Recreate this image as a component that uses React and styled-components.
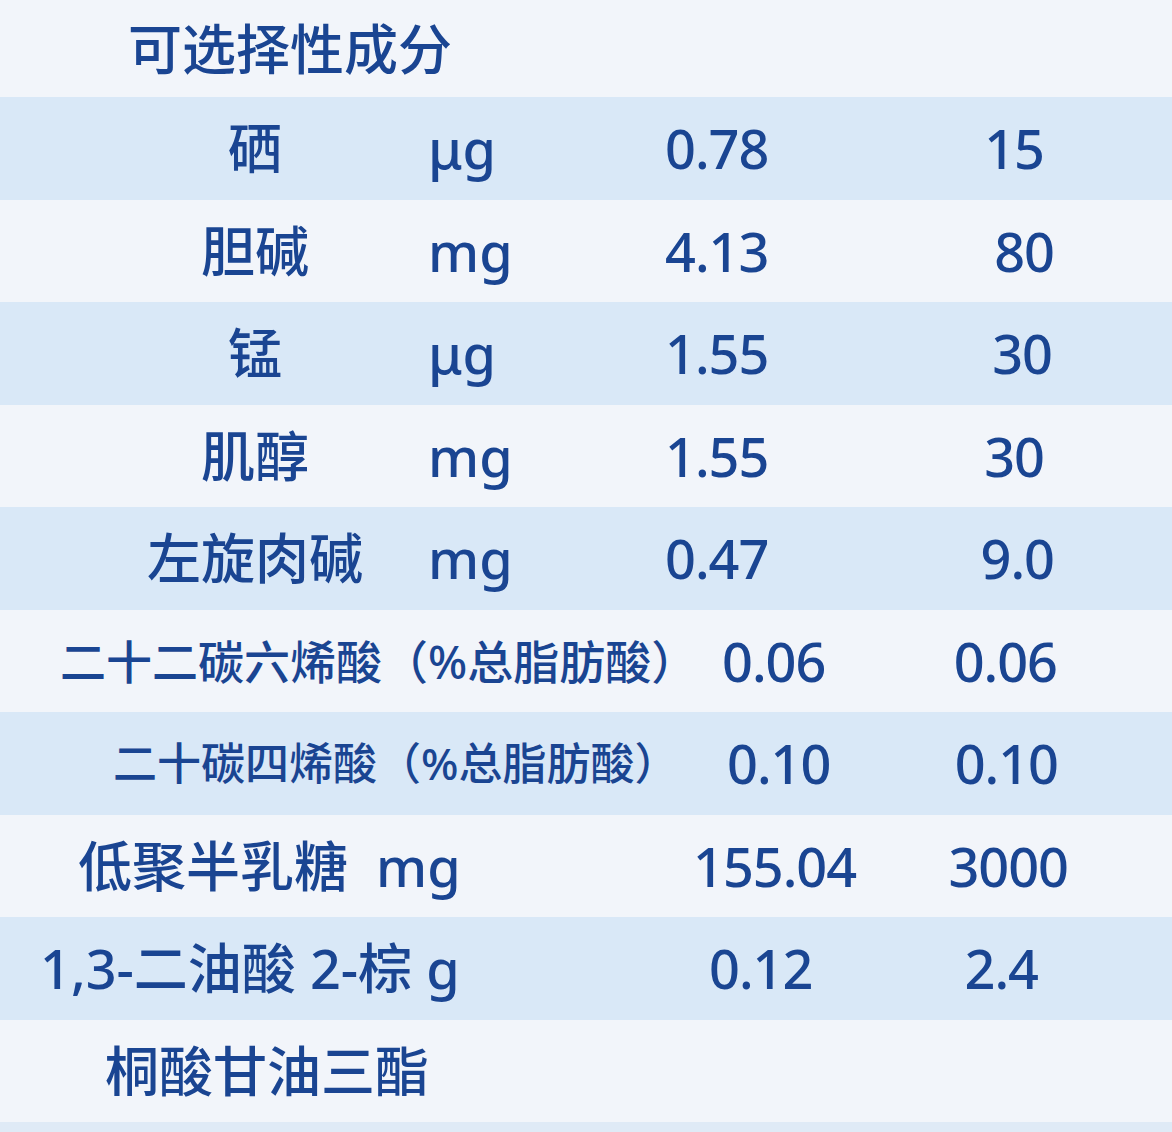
import React from "react";
import styled, { createGlobalStyle } from "styled-components";

const GlobalStyle = createGlobalStyle`
  html, body {
    margin: 0;
    padding: 0;
    background: #f2f5fa;
  }
  body {
    font-family: "Noto Sans", "Noto Sans CJK SC", sans-serif;
    font-weight: 500;
    color: #1a4592;
  }
`;

const Page = styled.div`
  width: 1172px;
  height: 1132px;
  overflow: hidden;
  background: #f2f5fa;
`;

const TitleBar = styled.div`
  height: 97px;
  display: flex;
  align-items: center;
  padding-left: 128px;
  font-size: 54px;
  line-height: 1;
`;

const Row = styled.div`
  height: 102.5px;
  display: grid;
  grid-template-columns: ${(p) => p.$cols || "410px 240px 250px 1fr"};
  align-items: center;
  background: ${(p) => (p.$shade ? "#d9e8f7" : "#f2f5fa")};
  font-size: 54px;
  line-height: 1;
  white-space: nowrap;
`;

const Name = styled.div`
  text-align: ${(p) => (p.$left ? "left" : "center")};
  padding-left: ${(p) => p.$pl ?? 100}px;
  font-size: ${(p) => p.$size || 54}px;
`;

const Unit = styled.div`
  padding-left: ${(p) => p.$pl ?? 18}px;
`;

const Value = styled.div`
  padding-left: ${(p) => p.$pl ?? 15}px;
  letter-spacing: -1px;
`;

const Rda = styled.div`
  text-align: right;
  padding-right: ${(p) => p.$pr ?? 120}px;
  letter-spacing: -1px;
`;

const BottomStrip = styled.div`
  height: 10px;
  background: #dfeaf6;
`;

const basic = [
  { name: "硒", unit: "μg", value: "0.78", rda: "15", pr: 128 },
  { name: "胆碱", unit: "mg", value: "4.13", rda: "80", pr: 118 },
  { name: "锰", unit: "μg", value: "1.55", rda: "30", pr: 120 },
  { name: "肌醇", unit: "mg", value: "1.55", rda: "30", pr: 128 },
  { name: "左旋肉碱", unit: "mg", value: "0.47", rda: "9.0", pr: 118 },
];

const wide = [
  { label: "二十二碳六烯酸（%总脂肪酸）", size: 46, pl: 60, cols: "710px 230px 1fr", vpl: 12, pr: 115, value: "0.06", rda: "0.06" },
  { label: "二十碳四烯酸（%总脂肪酸）", size: 44, pl: 113, cols: "710px 230px 1fr", vpl: 17, pr: 114, value: "0.10", rda: "0.10" },
  { label: "低聚半乳糖\u00a0 mg", size: 54, pl: 78, cols: "690px 250px 1fr", vpl: 3, pr: 104, value: "155.04", rda: "3000" },
  { label: "1,3-二油酸 2-棕 g", size: 54, pl: 40, cols: "700px 250px 1fr", vpl: 9, pr: 134, value: "0.12", rda: "2.4" },
  { label: "桐酸甘油三酯", size: 54, pl: 105, cols: "700px 250px 1fr", vpl: 0, pr: 0, value: "", rda: "" },
];

export default function App() {
  return (
    <Page>
      <GlobalStyle />
      <TitleBar>可选择性成分</TitleBar>
      {basic.map((r, i) => (
        <Row key={r.name} $shade={i % 2 === 0}>
          <Name>{r.name}</Name>
          <Unit>{r.unit}</Unit>
          <Value>{r.value}</Value>
          <Rda $pr={r.pr}>{r.rda}</Rda>
        </Row>
      ))}
      {wide.map((r, i) => (
        <Row key={r.label} $cols={r.cols} $shade={(basic.length + i) % 2 === 0}>
          <Name $left $pl={r.pl} $size={r.size}>{r.label}</Name>
          <Value $pl={r.vpl}>{r.value}</Value>
          <Rda $pr={r.pr}>{r.rda}</Rda>
        </Row>
      ))}
      <BottomStrip />
    </Page>
  );
}
